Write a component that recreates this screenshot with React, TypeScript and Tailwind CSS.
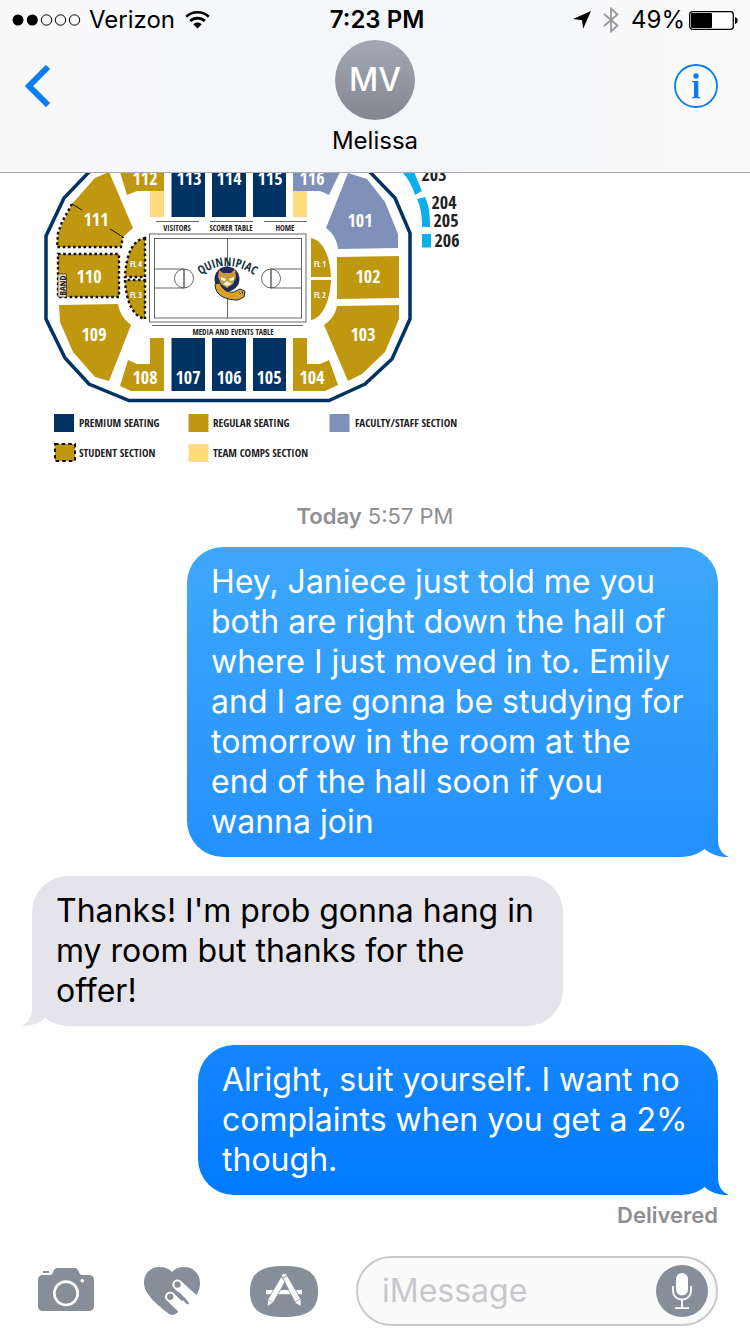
import React from 'react';

type BubbleProps = {
  side: 'sent' | 'received';
  className: string;
  tailClassName: string;
  children: React.ReactNode;
};

type LabelProps = {
  x: number;
  y: number;
  children: React.ReactNode;
};

const StatusBar = () => (
  <div className="grid h-10 grid-cols-3 items-center pl-3 pr-3 text-[24px] leading-10">
    <div className="flex items-center">
      <svg className="mr-2 h-3 w-[69px]" viewBox="0 0 69 12" aria-label="Signal strength">
        <circle cx="6" cy="6" r="5.5" />
        <circle cx="20.300" cy="6" r="5.5" />
        <g fill="none" stroke="#000" strokeWidth="1">
          <circle cx="34.500" cy="6" r="5.200" />
          <circle cx="48.500" cy="6" r="5.200" />
          <circle cx="62.500" cy="6" r="5.200" />
        </g>
      </svg>
      <span>Verizon</span>
      <svg className="ml-[10px] h-[18px] w-[25px]" viewBox="0 0 25 18" aria-label="Wi-Fi">
        <g fill="none" stroke="#000" strokeWidth="2.600">
          <path d="M1.200 5.800C7.500 -0.200 17.500 -0.200 23.800 5.800" />
          <path d="M5.200 10C9.400 6.200 15.600 6.200 19.800 10" />
        </g>
        <path d="M8.300 13.200C10.800 11 14.200 11 16.700 13.200L12.500 17.500Z" />
      </svg>
    </div>
    <div className="pl-1 text-center font-semibold">7:23 PM</div>
    <div className="flex items-center justify-end">
      <svg className="mr-3 h-[18px] w-[18px]" viewBox="0 0 18 18" aria-label="Location">
        <path d="M18 0L10.200 17.800L9 9.200L0 8Z" />
      </svg>
      <svg className="mr-3 h-[26px] w-4" viewBox="0 0 16 26" aria-label="Bluetooth">
        <path d="M1 7L14.500 18.500L8 24.500V1.500L14.500 7.500L1 19" fill="none" stroke="#98989b" strokeWidth="1.800" />
      </svg>
      <span>49%</span>
      <svg className="ml-1 h-[19px] w-[49px]" viewBox="0 0 49 19" aria-label="Battery">
        <rect x="0.700" y="0.700" width="43.600" height="17.600" rx="2.800" fill="#fff" stroke="#000" strokeWidth="1.300" />
        <rect x="2" y="2" width="21" height="15" rx="1" />
        <path d="M46 6C49.500 6.500 49.500 12.500 46 13Z" />
      </svg>
    </div>
  </div>
);

const ChatHeader = () => (
  <header className="border-b border-[#a9abae] bg-gradient-to-r from-[#f9f9fa] via-[#f4f6f9] to-[#fafafa]">
    <StatusBar />
    <div className="grid h-[132px] grid-cols-3 items-start">
      <button className="flex h-[92px] items-center justify-self-start pl-6" aria-label="Back">
        <svg className="h-[42px] w-7" viewBox="0 0 28 42" fill="none" stroke="#0a7cf2" strokeWidth="6">
          <path d="M24 2L5 21L24 40" />
        </svg>
      </button>
      <div className="flex flex-col items-center">
        <div className="flex h-20 w-20 items-center justify-center rounded-full bg-gradient-to-b from-[#a4a8b6] to-[#848790] text-[32px] font-medium text-white">
          MV
        </div>
        <h1 className="text-[24px] leading-[42px]">Melissa</h1>
      </div>
      <button className="flex h-[92px] items-center justify-self-end pr-8" aria-label="Details">
        <svg className="h-11 w-11" viewBox="0 0 44 44" fill="#0a7cf2">
          <circle cx="22" cy="22" r="21" fill="none" stroke="#0a7cf2" strokeWidth="1.800" />
          <circle cx="22" cy="12" r="2.700" />
          <path d="M18 17H24.300V32.300C24.300 33 25 33.200 26.300 33.300V34.300H18V33.300C19.300 33.200 20 33 20 32.300V19C20 18.300 19.400 18.100 18 18Z" />
        </svg>
      </button>
    </div>
  </header>
);

const SectionLabel = ({ x, y, children }: LabelProps) => (
  <text x={x} y={y} fontSize="18" fill="#fff" textAnchor="middle">{children}</text>
);

const LevelLabel = ({ x, y, children }: LabelProps) => (
  <text x={x} y={y} fontSize="18" fill="#222" textAnchor="middle">{children}</text>
);

const FloorLabel = ({ x, y, children }: LabelProps) => (
  <text x={x} y={y} fontSize="8" fill="#fff" textAnchor="middle">{children}</text>
);

const CourtLabel = ({ x, y, children }: LabelProps) => (
  <text x={x} y={y} fontSize="8" fill="#222" textAnchor="middle">{children}</text>
);

const LegendLabel = ({ x, y, children }: LabelProps) => (
  <text x={x} y={y} fontSize="11" fill="#222">{children}</text>
);

const SeatingMap = () => (
  <svg
    className="ml-[30px] block h-[297px] w-[440px] font-['Open_Sans_Condensed','Open_Sans',sans-serif] font-bold"
    viewBox="30 173 440 297"
    role="img"
    aria-label="Arena seating map"
  >
    <path
      d="M90 171L64 198L46 236V319L65 358L89 384L129 400.500H329L365 384L392 359L410 319V233L395 198L369 171"
      fill="none"
      stroke="#003263"
      strokeWidth="3.500"
    />

    {/* Regular seating */}
    <g fill="#c0980f">
      <path d="M109 172L95 178L72 204L58 233L57 247H121L123 237L133 228Z" />
      <path d="M120 172H164V191H137L127 195Z" />
      <path d="M58 254H119V297H58Z" />
      <path d="M59 305L118 304C120 315 125 320 131 325L109 381L95 377L73 352L60 322Z" />
      <path d="M164 338V391H131L120 386L128 360L137 364H150V338Z" />
      <path d="M293 338V391H325L338 385L329 360L320 364H307V338Z" />
      <path d="M337 306L399 305V319L385 352L362 374L348 381L324 325C331 320 335 315 337 306Z" />
      <path d="M337 257L399 256V298L337 299Z" />
      <path d="M145 238V277H125C126 256 132 240 145 238Z" />
      <path d="M145 280V319C132 316 126 300 125 280Z" />
      <path d="M311 238C323 240 330 256 331 277H311Z" />
      <path d="M311 280H331C330 300 323 318 311 320Z" />
    </g>

    {/* Student section edges */}
    <g fill="none" stroke="#111" strokeWidth="2.400" strokeDasharray="2.600 2.600">
      <path d="M72 204L62 222L58 233L57 247H121L123 237" />
      <path d="M58 254H119V297H58Z" />
      <path d="M145 238V277H125C126 256 132 240 145 238Z" />
      <path d="M145 280V319C132 316 126 300 125 280Z" />
    </g>
    <path d="M72 204L82 210M110 229L123 237" stroke="#111" strokeWidth="1" />

    {/* Premium seating */}
    <g fill="#003263">
      <rect x="171.500" y="172" width="33.500" height="45" />
      <rect x="212" y="172" width="34" height="45" />
      <rect x="253" y="172" width="33" height="45" />
      <rect x="171.500" y="338" width="33.500" height="53" />
      <rect x="212" y="338" width="34" height="53" />
      <rect x="253" y="338" width="33" height="53" />
    </g>

    {/* Faculty and team comps */}
    <g fill="#7f91b8">
      <path d="M293 172H340L329 195L320 191H293Z" />
      <path d="M348 173L367 179L385 202L398 234V248L338 249C337 240 333 233 326 228Z" />
    </g>
    <rect x="150" y="191" width="14" height="26" fill="#ffdb7c" />
    <rect x="293" y="191" width="14" height="26" fill="#ffdb7c" />

    <g fill="#0eaeea">
      <path d="M402 172H414L422 191L415 195C412 186 408 178 402 172Z" />
      <path d="M417 199L425 197C429 206 430 213 430 227H422C422 215 421 208 417 199Z" />
      <rect x="422" y="234" width="9" height="13.500" />
    </g>

    <SectionLabel x={145} y={185}>112</SectionLabel>
    <SectionLabel x={189} y={185}>113</SectionLabel>
    <SectionLabel x={229} y={185}>114</SectionLabel>
    <SectionLabel x={270} y={185}>115</SectionLabel>
    <SectionLabel x={312} y={185}>116</SectionLabel>
    <SectionLabel x={96} y={226}>111</SectionLabel>
    <SectionLabel x={360} y={227}>101</SectionLabel>
    <SectionLabel x={89} y={283}>110</SectionLabel>
    <SectionLabel x={368} y={283}>102</SectionLabel>
    <SectionLabel x={94} y={341}>109</SectionLabel>
    <SectionLabel x={363} y={341}>103</SectionLabel>
    <SectionLabel x={145} y={384}>108</SectionLabel>
    <SectionLabel x={188} y={384}>107</SectionLabel>
    <SectionLabel x={229} y={384}>106</SectionLabel>
    <SectionLabel x={269} y={384}>105</SectionLabel>
    <SectionLabel x={312} y={384}>104</SectionLabel>

    <LevelLabel x={434} y={181}>203</LevelLabel>
    <LevelLabel x={444} y={209}>204</LevelLabel>
    <LevelLabel x={446} y={227}>205</LevelLabel>
    <LevelLabel x={447} y={247}>206</LevelLabel>

    <FloorLabel x={136} y={267}>FL 4</FloorLabel>
    <FloorLabel x={136} y={298}>FL 3</FloorLabel>
    <FloorLabel x={320} y={267}>FL 1</FloorLabel>
    <FloorLabel x={320} y={298}>FL 2</FloorLabel>

    <rect x="58" y="274" width="8.500" height="23" fill="#e9dfc3" stroke="#111" strokeWidth="0.600" />
    <text transform="translate(65.500 285.500) rotate(-90)" fontSize="9" fill="#222" textAnchor="middle">BAND</text>

    {/* Court */}
    <g fill="none" stroke="#555" strokeWidth="0.900">
      <rect x="149.500" y="234" width="156.500" height="88" />
      <rect x="154.500" y="238.500" width="147" height="79.500" />
      <path d="M227.500 238V318M154 269H184V288H154M301 269H271V288H301M184 269V288M271 269V288" />
      <circle cx="184" cy="278.500" r="9.500" />
      <circle cx="271" cy="278.500" r="9.500" />
      <path d="M156 221.500H199M210 221.500H253M264 221.500H307M152 325.500H303" />
    </g>
    <CourtLabel x={177} y={231}>VISITORS</CourtLabel>
    <CourtLabel x={231} y={231}>SCORER TABLE</CourtLabel>
    <CourtLabel x={285} y={231}>HOME</CourtLabel>
    <CourtLabel x={233} y={335}>MEDIA AND EVENTS TABLE</CourtLabel>

    {/* Team logo */}
    <circle cx="227" cy="279" r="12.500" fill="#1d2a5b" />
    <path d="M215 284C215 296 226 300 238 300L244 297L245 291L240 289L234 292C227 293 222 289 220 283Z" fill="#d9a520" stroke="#14284b" strokeWidth="1" />
    <path d="M219 270L223 273H231L235 269L236 277L233 284L227 288L221 284L218 277Z" fill="#c99a3a" />
    <path d="M221 277L226 279L225 281L221 280ZM234 277L229 279L230 281L234 280Z" fill="#fff" />
    <path d="M223 284L227 281L232 284L227 286Z" fill="#f3eee0" />
    <path d="M239 292L241 294M242 291L243 294" stroke="#14284b" strokeWidth="0.800" />
    <path id="logo-arch" d="M201 275Q227 257 254 275" fill="none" />
    <text fontSize="12" fill="#14363f">
      <textPath href="#logo-arch" startOffset="50%" textAnchor="middle">QUINNIPIAC</textPath>
    </text>

    {/* Legend */}
    <rect x="54" y="414" width="20" height="18" fill="#003263" />
    <rect x="188.500" y="414" width="20" height="18" fill="#c0980f" />
    <rect x="329.500" y="414" width="20" height="18" fill="#7f91b8" />
    <rect x="55" y="444" width="20" height="17" fill="#c0980f" stroke="#111" strokeWidth="2" strokeDasharray="3.600 3" />
    <rect x="188.500" y="444" width="20" height="18" fill="#ffdb7c" />
    <LegendLabel x={79} y={427}>PREMIUM SEATING</LegendLabel>
    <LegendLabel x={213} y={427}>REGULAR SEATING</LegendLabel>
    <LegendLabel x={355} y={427}>FACULTY/STAFF SECTION</LegendLabel>
    <LegendLabel x={79} y={457}>STUDENT SECTION</LegendLabel>
    <LegendLabel x={213} y={457}>TEAM COMPS SECTION</LegendLabel>
  </svg>
);

const Bubble = ({ side, className, tailClassName, children }: BubbleProps) => {
  const sent = side === 'sent';

  return (
    <div
      className={`relative max-w-full rounded-[36px] py-[15px] pl-6 text-[32px] leading-10 ${
        sent ? 'self-end pr-7 text-white' : 'self-start pr-6 text-black'
      } ${className}`}
    >
      {children}
      <svg
        className={`absolute bottom-0 h-9 w-[41px] ${sent ? '-right-[11px]' : '-left-[11px] -scale-x-100'} ${tailClassName}`}
        viewBox="0 0 41 36"
        fill="currentColor"
        aria-hidden="true"
      >
        <path d="M26 4L30 2V19C30 27 34 33 41 36C32 36.500 24 34 17 28.500L16 24Z" />
      </svg>
    </div>
  );
};

const CameraIcon = () => (
  <svg className="h-12 w-14" viewBox="0 0 56 48" fill="#868e99">
    <path d="M5 8H12C14 8 14.500 6.500 15.500 4C16.300 2 17.500 1 19.500 1H36.500C38.500 1 39.700 2 40.500 4C41.500 6.500 42 8 44 8H51C54 8 56 10 56 13V39C56 42 54 44 51 44H5C2 44 0 42 0 39V13C0 10 2 8 5 8Z" />
    <rect x="5" y="4" width="6" height="2" />
    <circle cx="28" cy="26.300" r="11.700" fill="none" stroke="#fff" strokeWidth="2.600" />
    <circle cx="44.300" cy="13.700" r="1.800" fill="#fff" />
  </svg>
);

const HeartIcon = () => (
  <svg className="h-12 w-14" viewBox="0 0 56 48" fill="#868e99">
    <path d="M28 5C31 1.500 35 0 40 0C49.500 0 56 7 56 16C56 21 54.500 25 52 29L33 46C31.500 47 29.500 48 28 48C26 48 20 43.500 14 38C5 30 0 23 0 15.500C0 6.500 6.500 0 15.500 0C20.500 0 25 1.500 28 5Z" />
    <g stroke="#fff" strokeWidth="10" strokeLinecap="round">
      <path d="M33.300 17.500L56 38" />
      <path d="M26 29.700L44 47" />
      <path d="M42 37L48 42" />
    </g>
    <path d="M34.500 26.500L43.500 36" stroke="#868e99" strokeWidth="2.600" strokeLinecap="round" />
    <path d="M33.500 14.300C36 14.300 37 16.500 36.700 18.500C36.300 20.500 34 21 32.300 20.500C30.500 20 30 18 30.500 16.500C31 15 32 14.300 33.500 14.300Z" />
    <path d="M26.200 26.500C28.700 26.500 29.700 28.700 29.400 30.700C29 32.700 26.700 33.200 25 32.700C23.200 32.200 22.700 30.200 23.200 28.700C23.700 27.200 24.700 26.500 26.200 26.500Z" />
  </svg>
);

const AppStoreIcon = () => (
  <svg className="h-[51px] w-[68px]" viewBox="0 0 68 51" fill="#fff">
    <path d="M34 0C56 0 68 6 68 25.500C68 45 56 51 34 51C12 51 0 45 0 25.500C0 6 12 0 34 0Z" fill="#868e99" />
    <rect x="16" y="24" width="36" height="4.200" />
    <g stroke="#868e99" strokeWidth="0.800">
      <path d="M31 11L36 14L23.300 36.500L17.300 40.500L17.500 34Z" />
      <path d="M31.500 9.500C32.500 7 35.500 7 36.800 9L51 33.500L51 40.500L45.300 37Z" />
      <path d="M17.800 33.500L23 36.500M45.200 35.800L50.800 32.600M33 12L37.500 9.500" />
    </g>
  </svg>
);

const MicIcon = () => (
  <svg className="h-[52px] w-[52px]" viewBox="0 0 52 52">
    <circle cx="26" cy="26" r="26" fill="#868e99" />
    <rect x="20" y="8" width="12" height="22.500" rx="6" fill="#fff" />
    <path d="M17 21V25.500C17 31 21 34.500 26 34.500C31 34.500 35 31 35 25.500V21M26 34.500V43M19 43.200H33" fill="none" stroke="#fff" strokeWidth="1.800" />
  </svg>
);

const Composer = () => (
  <footer className="flex items-center pb-2 pl-[38px] pr-8">
    <button className="mr-[50px] shrink-0" aria-label="Camera">
      <CameraIcon />
    </button>
    <button className="mr-[50px] shrink-0" aria-label="Digital Touch">
      <HeartIcon />
    </button>
    <button className="mr-[38px] shrink-0" aria-label="Apps">
      <AppStoreIcon />
    </button>
    <div className="flex h-[70px] min-w-0 flex-1 items-center rounded-full border-2 border-[#c8c8cd] bg-[#fafafa] pl-6 pr-2">
      <input
        type="text"
        aria-label="Message"
        placeholder="iMessage"
        className="w-full min-w-0 bg-transparent text-[32px] leading-10 outline-none placeholder:text-[#c7c7cc]"
      />
      <button className="shrink-0" aria-label="Record audio">
        <MicIcon />
      </button>
    </div>
  </footer>
);

const App = () => (
  <div className="flex min-h-screen flex-col bg-white font-[Inter,sans-serif] text-black">
    <ChatHeader />
    <main className="flex-1 pb-[29px]">
      <SeatingMap />
      <p className="pb-[19px] pt-[34px] text-center text-[22px] leading-6 text-[#8e8e93]">
        <span className="font-semibold">Today</span> 5:57 PM
      </p>
      <div className="flex flex-col gap-[19px] px-8">
        <Bubble side="sent" className="w-[531px] bg-gradient-to-b from-[#3da8fb] to-[#2490fe]" tailClassName="text-[#2591fe]">
          Hey, Janiece just told me you both are right down the hall of where I just moved in to. Emily and I are gonna be studying for tomorrow in the room at the end of the hall soon if you wanna join
        </Bubble>
        <Bubble side="received" className="w-[531px] bg-[#e5e4eb]" tailClassName="text-[#e5e4eb]">
          Thanks! I'm prob gonna hang in my room but thanks for the offer!
        </Bubble>
        <Bubble side="sent" className="w-[520px] bg-gradient-to-b from-[#1586ff] to-[#007aff]" tailClassName="text-[#017bff]">
          Alright, suit yourself. I want no complaints when you get a 2% though.
        </Bubble>
      </div>
      <p className="px-8 pt-2 text-right text-[22px] font-semibold leading-6 text-[#8e8e93]">Delivered</p>
    </main>
    <Composer />
  </div>
);

export default App;
